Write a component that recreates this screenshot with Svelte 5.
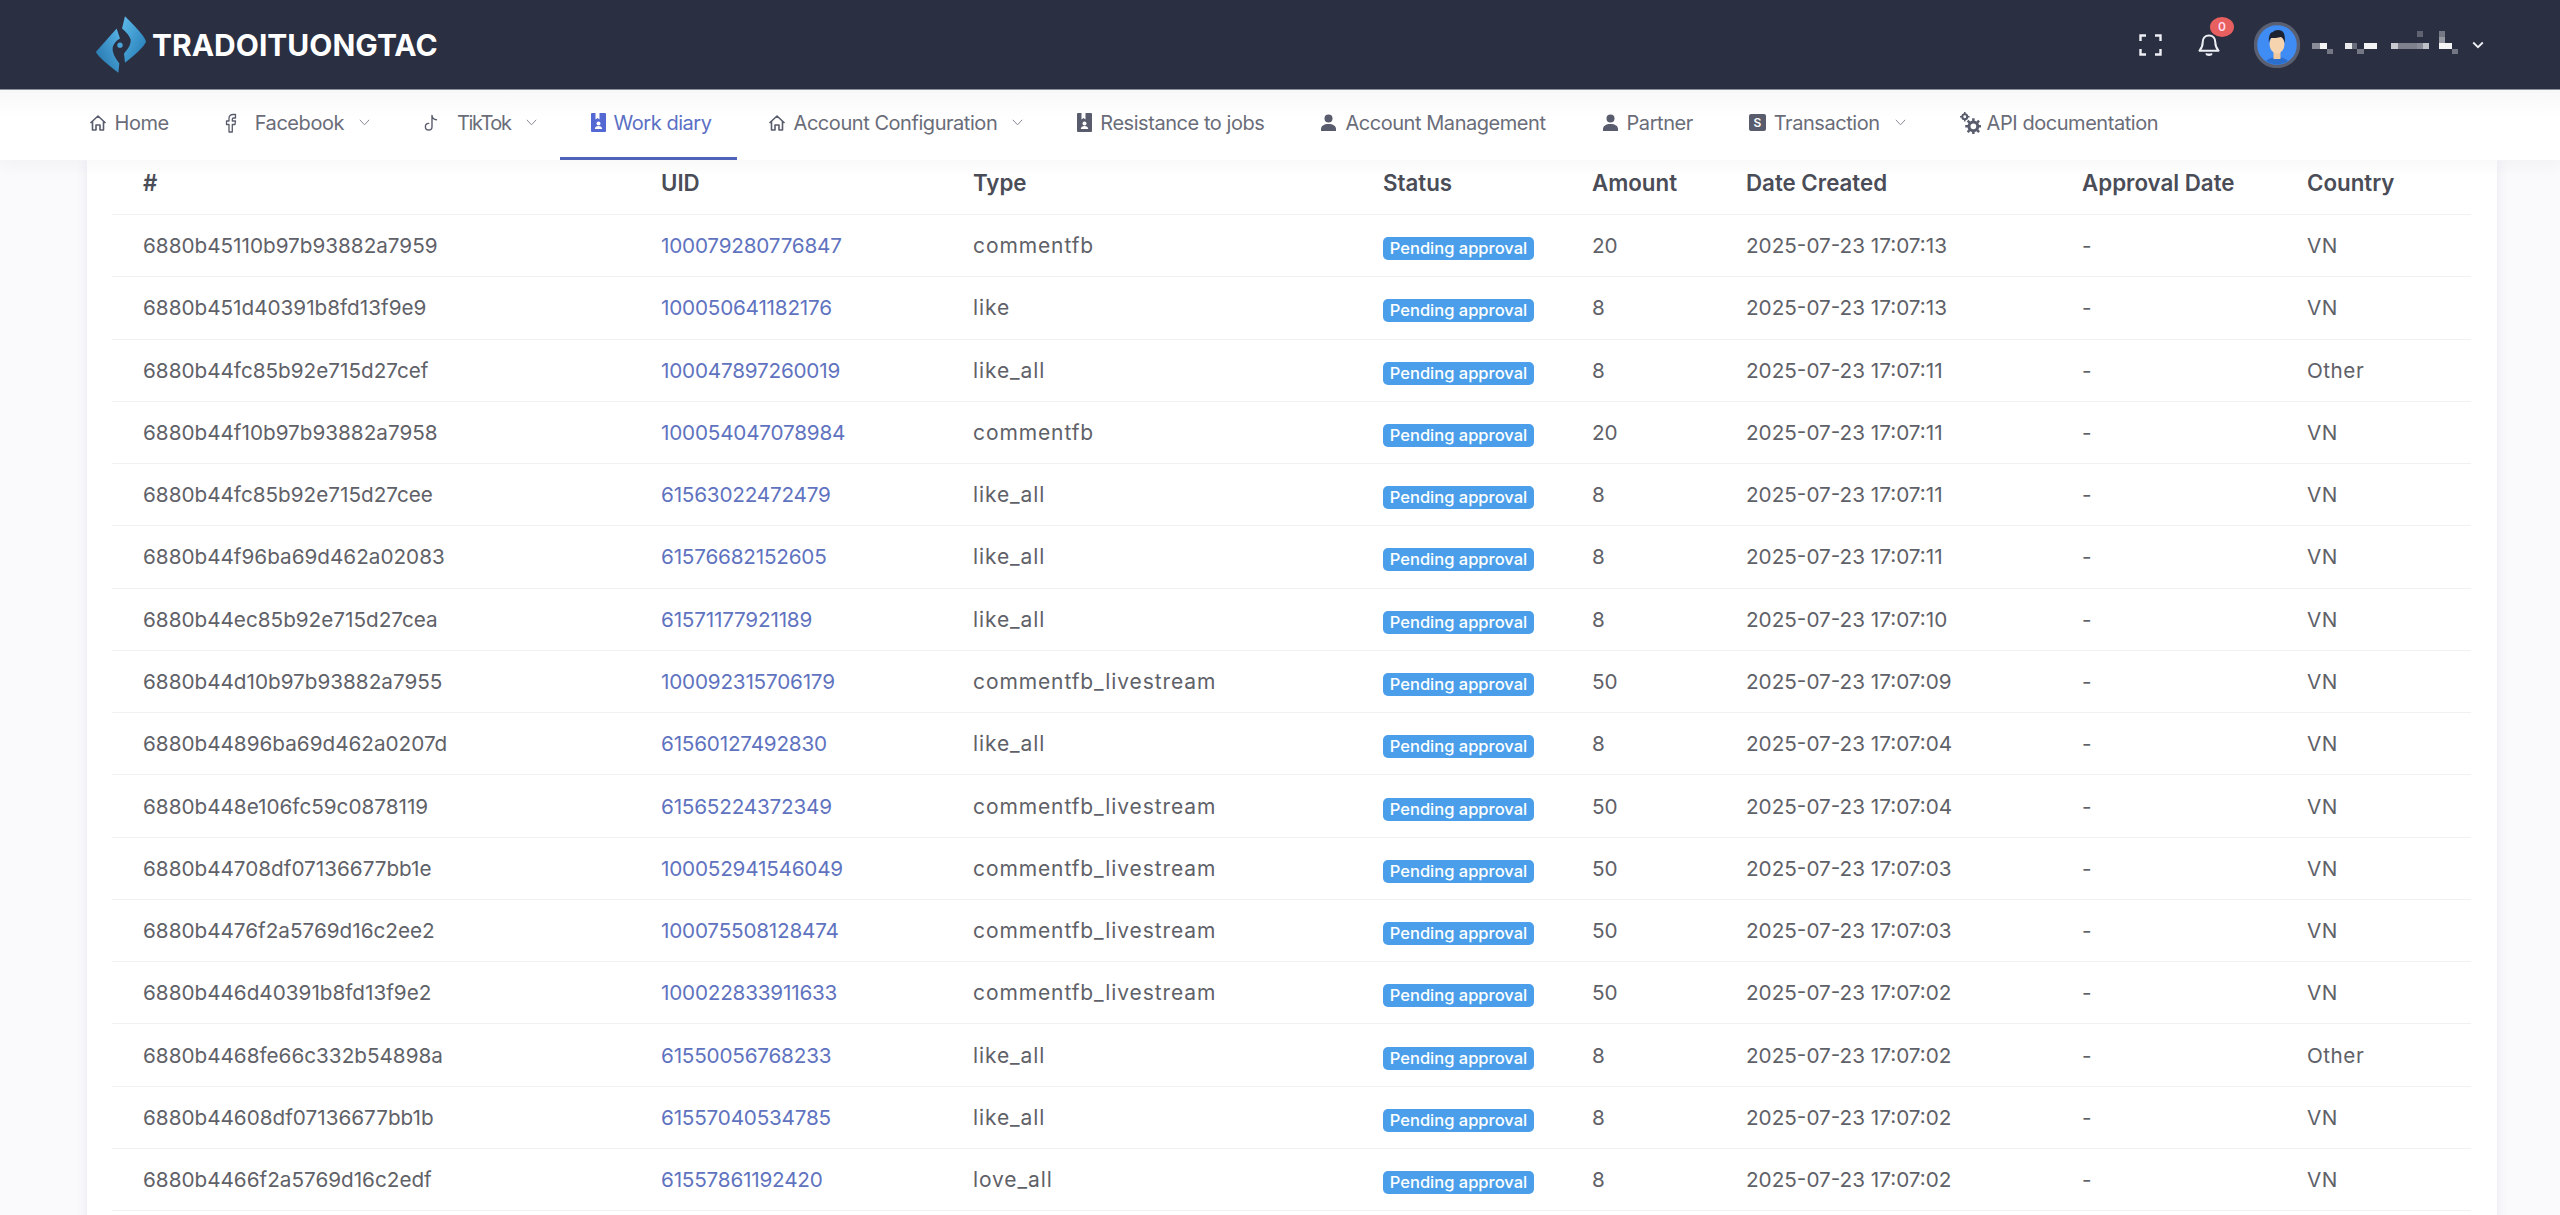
<script lang="ts">
	// Work diary page: top bar, nav strip and the job table.
	type NavItem = { label: string; icon: string; caret?: boolean; active?: boolean };

	const nav: NavItem[] = [
		{ label: 'Home', icon: 'home' },
		{ label: 'Facebook', icon: 'fb', caret: true },
		{ label: 'TikTok', icon: 'tiktok', caret: true },
		{ label: 'Work diary', icon: 'book', active: true },
		{ label: 'Account Configuration', icon: 'home', caret: true },
		{ label: 'Resistance to jobs', icon: 'book' },
		{ label: 'Account Management', icon: 'user' },
		{ label: 'Partner', icon: 'user' },
		{ label: 'Transaction', icon: 's', caret: true },
		{ label: 'API documentation', icon: 'gears' }
	];

	const rows = [
		['6880b45110b97b93882a7959', '100079280776847', 'commentfb', '20', '2025-07-23 17:07:13', 'VN'],
		['6880b451d40391b8fd13f9e9', '100050641182176', 'like', '8', '2025-07-23 17:07:13', 'VN'],
		['6880b44fc85b92e715d27cef', '100047897260019', 'like_all', '8', '2025-07-23 17:07:11', 'Other'],
		['6880b44f10b97b93882a7958', '100054047078984', 'commentfb', '20', '2025-07-23 17:07:11', 'VN'],
		['6880b44fc85b92e715d27cee', '61563022472479', 'like_all', '8', '2025-07-23 17:07:11', 'VN'],
		['6880b44f96ba69d462a02083', '61576682152605', 'like_all', '8', '2025-07-23 17:07:11', 'VN'],
		['6880b44ec85b92e715d27cea', '61571177921189', 'like_all', '8', '2025-07-23 17:07:10', 'VN'],
		['6880b44d10b97b93882a7955', '100092315706179', 'commentfb_livestream', '50', '2025-07-23 17:07:09', 'VN'],
		['6880b44896ba69d462a0207d', '61560127492830', 'like_all', '8', '2025-07-23 17:07:04', 'VN'],
		['6880b448e106fc59c0878119', '61565224372349', 'commentfb_livestream', '50', '2025-07-23 17:07:04', 'VN'],
		['6880b44708df07136677bb1e', '100052941546049', 'commentfb_livestream', '50', '2025-07-23 17:07:03', 'VN'],
		['6880b4476f2a5769d16c2ee2', '100075508128474', 'commentfb_livestream', '50', '2025-07-23 17:07:03', 'VN'],
		['6880b446d40391b8fd13f9e2', '100022833911633', 'commentfb_livestream', '50', '2025-07-23 17:07:02', 'VN'],
		['6880b4468fe66c332b54898a', '61550056768233', 'like_all', '8', '2025-07-23 17:07:02', 'Other'],
		['6880b44608df07136677bb1b', '61557040534785', 'like_all', '8', '2025-07-23 17:07:02', 'VN'],
		['6880b4466f2a5769d16c2edf', '61557861192420', 'love_all', '8', '2025-07-23 17:07:02', 'VN']
	];

	// mosaic that hides the account name: x, y, w, h, opacity
	const mosaic = [
		[0, 12, 8, 6, 0.45], [8, 12, 7, 6, 0.95], [15, 18, 6, 5, 0.35],
		[33, 12, 7, 6, 0.9], [40, 12, 5, 6, 0.3], [45, 18, 7, 5, 0.35], [52, 12, 13, 6, 0.95],
		[79, 12, 7, 6, 0.75], [86, 12, 19, 6, 0.4], [105, 0, 6, 6, 0.25], [105, 12, 6, 6, 0.45], [111, 12, 6, 6, 0.7],
		[127, 0, 6, 6, 0.35], [127, 6, 6, 6, 0.5], [127, 12, 13, 6, 0.95], [140, 18, 6, 5, 0.35]
	];
</script>

<div class="page">
	<header class="topbar">
		<div class="brand">
			<svg class="brand__mark" viewBox="108 18 150 170" aria-hidden="true">
				<defs>
					<linearGradient id="mark-l" x1="0" y1="1" x2="1" y2="0">
						<stop offset="0" stop-color="#1f6ea6" />
						<stop offset="1" stop-color="#58b4e6" />
					</linearGradient>
					<linearGradient id="mark-r" x1="0" y1="0" x2="1" y2="1">
						<stop offset="0" stop-color="#5fbcec" />
						<stop offset="1" stop-color="#1f76b0" />
					</linearGradient>
				</defs>
				<path fill="url(#mark-l)" d="M170 55 L108 125 Q112 140 175 188 L178 160 Q155 130 158 112 Q162 95 180 85 Z" />
				<path fill="url(#mark-r)" d="M195 18 Q258 80 258 95 Q250 115 195 158 L192 130 Q215 105 212 88 Q205 70 186 55 Z" />
				<circle cx="180" cy="105" r="8" fill="#4aa3d8" />
			</svg>
			<span class="brand__name">TRADOITUONGTAC</span>
		</div>

		<div class="tools">
			<svg class="tools__full" viewBox="0 0 23 22" aria-hidden="true">
				<path d="M1.500 7V1.500H7M16 1.500h5.500V7M21.500 15v5.500H16M7 20.500H1.500V15" fill="none" stroke="#eef0f5" stroke-width="2.400" />
			</svg>
			<span class="bell">
				<svg viewBox="0 0 22 24" aria-hidden="true">
					<path d="M11 2.500c-4 0-6.300 3-6.300 6.800 0 4.500-1 6-3.200 8.400h19c-2.200-2.400-3.200-3.900-3.200-8.400 0-3.800-2.300-6.800-6.300-6.800Z" fill="none" stroke="#eef0f5" stroke-width="2" stroke-linejoin="round" />
					<path d="M8 20.500c.6 2.200 5.400 2.200 6 0" fill="#eef0f5" stroke="#eef0f5" stroke-width="1.500" />
				</svg>
				<span class="bell__count">0</span>
			</span>
			<svg class="avatar" viewBox="0 0 46 46" aria-hidden="true">
				<clipPath id="avatar-clip"><circle cx="23" cy="23" r="19.500" /></clipPath>
				<circle cx="23" cy="23" r="21.500" fill="#3f8cf5" stroke="#5a6072" stroke-width="3.400" />
				<g clip-path="url(#avatar-clip)">
					<path d="M10 44c1-7 7-9 13-9s12 2 13 9Z" fill="#2a6fd0" />
					<rect x="19.500" y="28" width="7" height="9" fill="#f0c8a0" />
					<ellipse cx="23" cy="22" rx="7.500" ry="9.500" fill="#f6d4b0" />
					<path d="M15 21c-1-8 2-11 4-11 1-2 6-3 9-1 3 2 3 7 3 12-1-3-2-5-4-6-3 1-8 1-10 1-1 1-2 3-2 5Z" fill="#1d2233" />
				</g>
			</svg>
			<svg class="mosaic" viewBox="0 0 146 24" aria-hidden="true">
				{#each mosaic as [x, y, w, h, o]}
					<rect {x} {y} width={w} height={h} fill="#fff" opacity={o} />
				{/each}
			</svg>
			<svg class="tools__caret" viewBox="0 0 12 8" aria-hidden="true">
				<path d="M1.200 1.500 6 6.200l4.800-4.700" fill="none" stroke="#eef0f5" stroke-width="1.800" />
			</svg>
		</div>
	</header>

	<nav class="menu">
		{#each nav as item}
			<div class="menu__item" class:is-active={item.active} class:has-caret={item.caret}>
				<span class="menu__icon menu__icon--{item.icon}">
					{#if item.icon === 'home'}
						<svg viewBox="0 0 18 18"><path d="M1.500 9 9 2l7.500 7M3.500 7.500V16h3.500v-5h4v5h3.500V7.500" fill="none" stroke="currentColor" stroke-width="1.600" stroke-linejoin="round" /></svg>
					{:else if item.icon === 'fb'}
						<svg viewBox="0 0 12 20"><path d="M4 19V11.500H1.500V8H4V5.500C4 3 5.500 1.500 8 1.500h2.500V5H8.500C7.700 5 7.300 5.400 7.300 6.200V8h3.200l-.5 3.500H7.300V19Z" fill="none" stroke="currentColor" stroke-width="1.300" stroke-linejoin="round" /></svg>
					{:else if item.icon === 'tiktok'}
						<svg viewBox="0 0 14 18"><path d="M8 1.500v11.200a3.300 3.300 0 1 1-3.300-3.300M8 1.500c.3 2.600 2 4.100 4.500 4.300" fill="none" stroke="currentColor" stroke-width="1.400" stroke-linecap="round" /></svg>
					{:else if item.icon === 'book'}
						<svg viewBox="0 0 15 19"><path d="M0 1a1 1 0 0 1 1-1h3.500v6.500l2-1.500 2 1.500V0H14a1 1 0 0 1 1 1v17a1 1 0 0 1-1 1H1a1 1 0 0 1-1-1Z" fill="currentColor" /><circle cx="7.500" cy="10.500" r="2" fill="#fff" /><path d="M3.800 16c0-2 1.700-3 3.700-3s3.700 1 3.700 3Z" fill="#fff" /></svg>
					{:else if item.icon === 'user'}
						<svg viewBox="0 0 17 17"><circle cx="8.500" cy="4.500" r="4" fill="currentColor" /><path d="M1 17v-2c0-3 3-5 7.500-5s7.500 2 7.500 5v2Z" fill="currentColor" /></svg>
					{:else if item.icon === 's'}
						<span class="menu__s">S</span>
					{:else}
						<svg viewBox="0 0 22 23">
							<circle cx="5" cy="5" r="2.600" fill="none" stroke="currentColor" stroke-width="2.200" />
							<path d="M5 0v2M5 8v2M0 5h2M8 5h2" stroke="currentColor" stroke-width="1.600" />
							<circle cx="14" cy="15" r="4.600" fill="none" stroke="currentColor" stroke-width="3.200" />
							<path d="M14 6.500v3M14 20.500v2.500M5.500 15h3M19.500 15h2.500M8 9l2 2M18 19l2 2M20 9l-2 2M10 19l-2 2" stroke="currentColor" stroke-width="2.600" />
						</svg>
					{/if}
				</span>
				<span class="menu__label">{item.label}</span>
				{#if item.caret}
					<svg class="menu__caret" viewBox="0 0 11 7" aria-hidden="true"><path d="M.8.800 5.500 5.800 10.200.800" fill="none" stroke="currentColor" stroke-width="1" /></svg>
				{/if}
			</div>
		{/each}
	</nav>

	<main class="card">
		<table class="jobs">
			<colgroup>
				<col style="width:518px" /><col style="width:312px" /><col style="width:410px" /><col style="width:209px" />
				<col style="width:154px" /><col style="width:336px" /><col style="width:225px" /><col style="width:195px" />
			</colgroup>
			<thead>
				<tr>
					<th>#</th><th>UID</th><th>Type</th><th>Status</th><th>Amount</th><th>Date Created</th><th>Approval Date</th><th>Country</th>
				</tr>
			</thead>
			<tbody>
				{#each rows as [id, uid, type, amount, created, country]}
					<tr>
						<td>{id}</td>
						<td class="link">{uid}</td>
						<td class="type">{type}</td>
						<td><span class="badge">Pending approval</span></td>
						<td>{amount}</td>
						<td>{created}</td>
						<td>-</td>
						<td class="country">{country}</td>
					</tr>
				{/each}
			</tbody>
		</table>
	</main>
</div>

<style>
	:global(body) {
		margin: 0;
		background: #fafafc;
		font-family: Inter, "Noto Sans", sans-serif;
	}
	.page {
		height: 1215px;
		overflow: hidden;
	}

	.topbar {
		height: 90px;
		box-sizing: border-box;
		display: flex;
		align-items: center;
		justify-content: space-between;
		padding: 0 76px 0 96px;
		background: #2a2f42;
		border-bottom: 1px solid #8f929c;
	}
	.brand {
		display: flex;
		align-items: center;
		gap: 6px;
	}
	.brand__mark {
		width: 50px;
		height: 57px;
	}
	.brand__name {
		color: #fff;
		font-size: 30px;
		font-weight: 700;
	}

	.tools {
		display: flex;
		align-items: center;
	}
	.tools__full {
		width: 23px;
		height: 22px;
	}
	.bell {
		position: relative;
		width: 22px;
		height: 24px;
		margin-left: 36px;
	}
	.bell svg {
		display: block;
		width: 22px;
		height: 24px;
	}
	.bell__count {
		position: absolute;
		left: 12px;
		top: -16px;
		width: 24px;
		height: 20px;
		border-radius: 50%;
		background: #e85f5f;
		color: #fde;
		font-size: 12px;
		font-weight: 600;
		line-height: 20px;
		text-align: center;
	}
	.avatar {
		width: 46px;
		height: 46px;
		margin-left: 34px;
	}
	.mosaic {
		width: 146px;
		height: 24px;
		margin-left: 12px;
		margin-top: -3px;
	}
	.tools__caret {
		width: 12px;
		height: 8px;
		margin-left: 14px;
	}

	.menu {
		position: relative;
		z-index: 1;
		height: 70px;
		display: flex;
		padding-left: 58px;
		background: linear-gradient(#f8f8f9, #fff 40%);
		box-shadow: 0 6px 14px rgba(60, 60, 90, 0.04);
	}
	.menu__item {
		display: flex;
		align-items: center;
		box-sizing: border-box;
		height: 70px;
		padding: 0 25.500px 5px 30.500px;
		color: #6a6d79;
		font-size: 20px;
		letter-spacing: -0.45px;
		white-space: nowrap;
	}
	.menu__item.has-caret {
		padding-right: 23.500px;
	}
	.menu__item.is-active {
		color: #5a6fc4;
		border-bottom: 3px solid #4f63b8;
		padding-bottom: 2px;
	}
	.menu__icon {
		display: flex;
		align-items: center;
		justify-content: center;
		margin-right: 8px;
		color: #585c6c;
	}
	.is-active .menu__icon {
		color: #5468d4;
	}
	.menu__icon svg {
		display: block;
		width: 18px;
		height: 18px;
	}
	.menu__icon--fb {
		margin-right: 18px;
	}
	.menu__icon--fb svg {
		width: 12px;
		height: 20px;
	}
	.menu__icon--tiktok {
		margin-right: 19px;
	}
	.menu__icon--tiktok svg {
		width: 14px;
		height: 18px;
	}
	.menu__icon--tiktok + .menu__label {
		letter-spacing: -1.400px;
	}
	.menu__icon--book svg {
		width: 15px;
		height: 19px;
	}
	.menu__icon--user svg {
		width: 17px;
		height: 17px;
	}
	.menu__icon--gears {
		margin-right: 6px;
	}
	.menu__icon--gears svg {
		width: 21px;
		height: 22px;
	}
	.menu__s {
		width: 17px;
		height: 17px;
		border-radius: 2px;
		background: #585c6c;
		color: #fff;
		font-size: 12px;
		font-weight: 600;
		line-height: 17px;
		text-align: center;
	}
	.menu__caret {
		width: 11px;
		height: 7px;
		margin-left: 15px;
		color: #888b96;
	}

	.card {
		margin: 0 63px 0 87px;
		padding: 0 25px 24px;
		background: #fff;
		box-shadow: 0 0 10px rgba(100, 100, 160, 0.12);
	}
	.jobs {
		width: 2359px;
		table-layout: fixed;
		border-collapse: collapse;
	}
	.jobs th,
	.jobs td {
		padding: 0 0 0 31px;
		text-align: left;
		border-bottom: 1px solid #f1f1f4;
		white-space: nowrap;
	}
	.jobs th {
		height: 54.500px;
		padding-bottom: 9.500px;
		box-sizing: border-box;
		color: #4a4d57;
		font-size: 22.300px;
		font-weight: 600;
	}
	.jobs td {
		height: 61.270px;
		color: #5f6168;
		font-size: 20.700px;
	}
	.jobs td.link {
		color: #5f73bf;
		letter-spacing: -0.2px;
	}
	.jobs td.type {
		font-size: 21px;
		letter-spacing: 0.9px;
	}
	.jobs td.country {
		letter-spacing: 0.5px;
	}
	.badge {
		display: inline-block;
		width: 151px;
		height: 23px;
		border-radius: 5px;
		background: #4b9fea;
		color: #fff;
		font-size: 16.500px;
		font-weight: 500;
		line-height: 23px;
		text-align: center;
		vertical-align: -3px;
	}
</style>
